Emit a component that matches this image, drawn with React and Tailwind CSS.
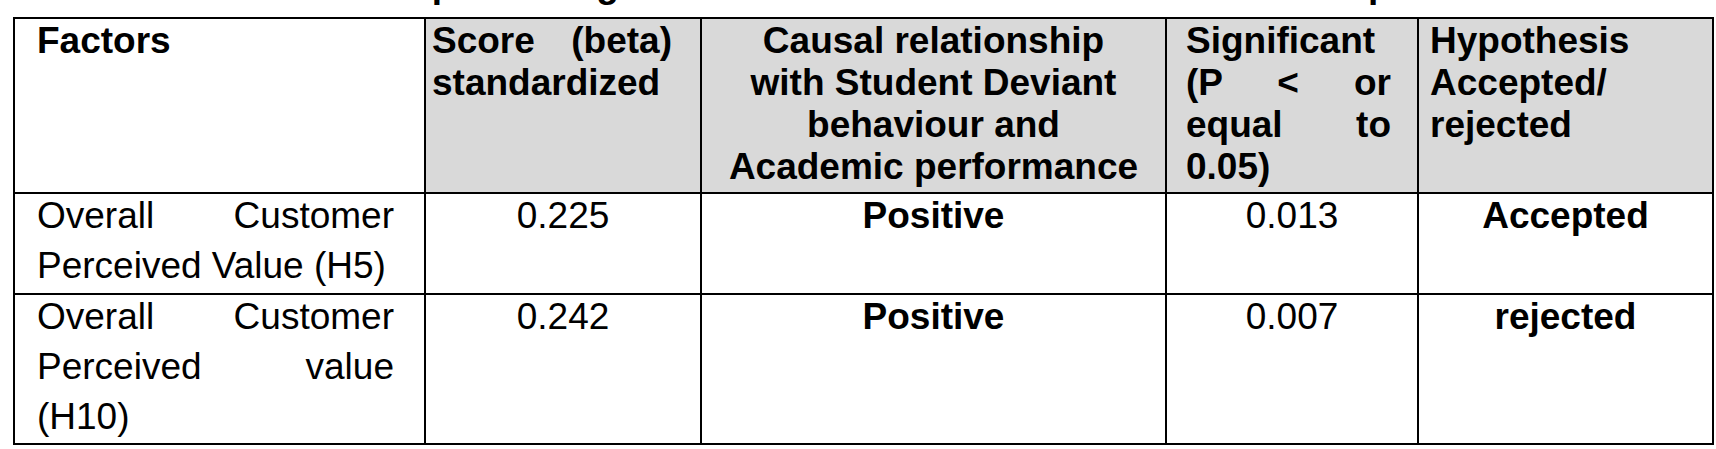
export default function App() {
  const font = { fontFamily: '"Liberation Sans", Arial, Helvetica, sans-serif' };
  const cell = "border-black border-r-2 border-b-2";
  return (
    <div className="w-[1716px] h-[449px] bg-white text-black overflow-hidden" style={font}>
      <div className="h-[17px] overflow-hidden">
        <div className="pl-[9px] -mt-[36px] whitespace-nowrap font-bold text-[37px] leading-[42px]">
          Table 10: Results of the path using Student Deviant behaviour and Academic performance
        </div>
      </div>
      <div className="ml-[13px] grid grid-cols-[413px_276px_465px_252px_295px] grid-rows-[177px_101px_150px]">
        {/* header */}
        <div className={`${cell} border-l-2 border-t-2 bg-white pl-[22px] pr-[30px] pt-px font-bold text-[37px] leading-[42px]`}>
          Factors
        </div>
        <div className={`${cell} border-t-2 bg-[#d9d9d9] pl-[6px] pr-[28px] pt-px font-bold text-[37px] leading-[42px] text-justify`}>
          Score (beta) standardized
        </div>
        <div className={`${cell} border-t-2 bg-[#d9d9d9] px-[22px] pt-px font-bold text-[37px] leading-[42px] text-center`}>
          Causal relationship with Student Deviant behaviour and Academic performance
        </div>
        <div className={`${cell} border-t-2 bg-[#d9d9d9] pl-[19px] pr-[26px] pt-px font-bold text-[37px] leading-[42px] text-justify`}>
          Significant (P &lt; or equal to 0.05)
        </div>
        <div className={`${cell} border-t-2 bg-[#d9d9d9] pl-[11px] pr-[20px] pt-px font-bold text-[37px] leading-[42px] text-left`}>
          Hypothesis Accepted/ rejected
        </div>

        {/* row 1 */}
        <div className={`${cell} border-l-2 pl-[22px] pr-[30px] text-[37px] leading-[50px] text-justify`}>
          <div className="-mt-[3px]">Overall Customer Perceived Value (H5)</div>
        </div>
        <div className={`${cell} text-[37px] leading-[50px] text-center`}>
          <div className="-mt-[3px]">0.225</div>
        </div>
        <div className={`${cell} text-[37px] leading-[50px] text-center font-bold`}>
          <div className="-mt-[3px]">Positive</div>
        </div>
        <div className={`${cell} text-[37px] leading-[50px] text-center`}>
          <div className="-mt-[3px]">0.013</div>
        </div>
        <div className={`${cell} text-[37px] leading-[50px] text-center font-bold`}>
          <div className="-mt-[3px]">Accepted</div>
        </div>

        {/* row 2 */}
        <div className={`${cell} border-l-2 pl-[22px] pr-[30px] text-[37px] leading-[50px] text-justify`}>
          <div className="-mt-[3px]">Overall Customer Perceived value (H10)</div>
        </div>
        <div className={`${cell} text-[37px] leading-[50px] text-center`}>
          <div className="-mt-[3px]">0.242</div>
        </div>
        <div className={`${cell} text-[37px] leading-[50px] text-center font-bold`}>
          <div className="-mt-[3px]">Positive</div>
        </div>
        <div className={`${cell} text-[37px] leading-[50px] text-center`}>
          <div className="-mt-[3px]">0.007</div>
        </div>
        <div className={`${cell} text-[37px] leading-[50px] text-center font-bold`}>
          <div className="-mt-[3px]">rejected</div>
        </div>
      </div>
    </div>
  );
}
